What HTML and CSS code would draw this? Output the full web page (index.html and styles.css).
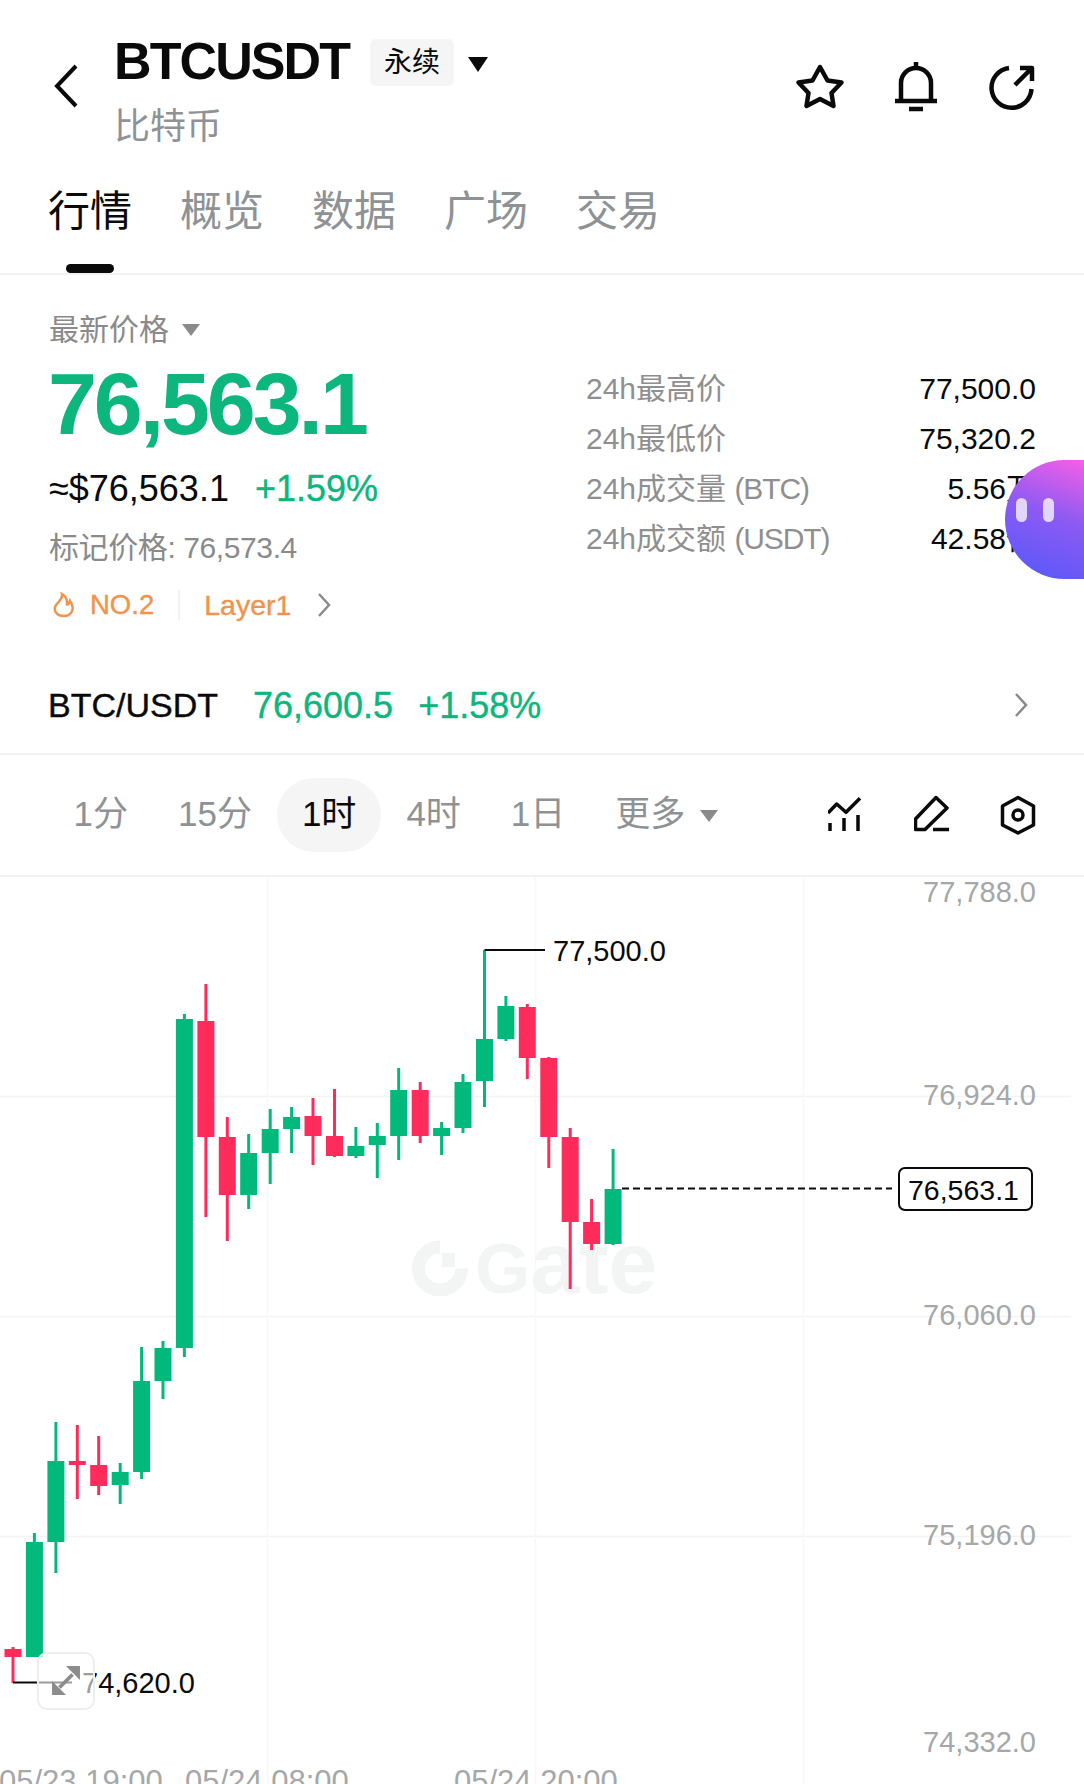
FILE: index.html
```html
<!DOCTYPE html>
<html>
    <head>
        <meta charset="utf-8">
        <title>BTCUSDT</title>
        <link rel="stylesheet" href="styles.css">
    </head>
    <body>
        <div class="page">
            <header class="header">
                <svg class="back" viewBox="0 0 26 46"><path d="M23 3 L4 23 L23 43"/></svg>
                <div class="title-block">
                    <div class="title-row">
                        <h1 class="symbol">BTCUSDT</h1>
                        <span class="badge">永续</span>
                        <span class="caret caret-black"></span>
                    </div>
                    <div class="subtitle">比特币</div>
                </div>
                <div class="header-icons">
                    <svg class="icon" viewBox="0 0 56 56"><path d="M28 9 L35.5 22.5 L49.5 24.5 L39.5 35 L41.5 48 L28 41 L14.5 48 L16.5 35 L6.5 24.5 L20.5 22.5 Z"/></svg>
                    <svg class="icon" viewBox="0 0 56 56"><path d="M13 43 V25 A15 15 0 0 1 43 25 V43 M7 43 H49 M28 4 V10 M21 51 H35"/></svg>
                    <svg class="icon" viewBox="0 0 56 56"><path d="M25 10 A20 20 0 1 0 47.5 31 M31 27 L48 10 M36 10 H48 V23"/></svg>
                </div>
            </header>

            <nav class="tabs">
                <a class="tab active">行情</a>
                <a class="tab">概览</a>
                <a class="tab">数据</a>
                <a class="tab">广场</a>
                <a class="tab">交易</a>
            </nav>

            <section class="quote">
                <div class="quote-main">
                    <div class="last-label">最新价格<span class="caret caret-gray"></span></div>
                    <div class="last-price">76,563.1</div>
                    <div class="fiat-row">
                        <span class="fiat">≈$76,563.1</span>
                        <span class="change">+1.59%</span>
                    </div>
                    <div class="mark">标记价格: 76,573.4</div>
                    <div class="tags">
                        <svg class="flame" viewBox="0 0 24 26"><path d="M10 2 C11 7 7 9 4 13 C1 18 4 24 12 24 C19 24 22 18 20 13 C19.5 11 18.5 10 18 9 C17.5 11 16 12.5 15 12.5 C15.5 8 13.5 4 10 2 Z"/></svg>
                        <span class="tag rank">NO.2</span>
                        <span class="tag-divider"></span>
                        <span class="tag">Layer1</span>
                        <svg class="chevron tag-chevron" viewBox="0 0 14 26"><path d="M2 2 L12 13 L2 24"/></svg>
                    </div>
                </div>
                <div class="stats">
                    <div class="stat"><span class="stat-label">24h最高价</span><span class="stat-value">77,500.0</span></div>
                    <div class="stat"><span class="stat-label">24h最低价</span><span class="stat-value">75,320.2</span></div>
                    <div class="stat"><span class="stat-label">24h成交量 <span class="unit">(BTC)</span></span><span class="stat-value">5.56万</span></div>
                    <div class="stat"><span class="stat-label">24h成交额 <span class="unit">(USDT)</span></span><span class="stat-value">42.58亿</span></div>
                </div>
            </section>

            <div class="spot">
                <span class="spot-name">BTC/USDT</span>
                <span class="spot-price">76,600.5</span>
                <span class="spot-change">+1.58%</span>
                <svg class="chevron spot-chevron" viewBox="0 0 14 26"><path d="M2 2 L12 13 L2 24"/></svg>
            </div>

            <div class="periods">
                <span class="period">1分</span>
                <span class="period">15分</span>
                <span class="period active">1时</span>
                <span class="period">4时</span>
                <span class="period">1日</span>
                <span class="period more">更多<span class="caret caret-gray"></span></span>
                <div class="tools">
                    <svg class="tool" viewBox="0 0 36 40"><path d="M0 18 L8.7 9 L18 17.3 L32 3.3 M2 36 V28 M16 36 V23 M30 36 V20"/></svg>
                    <svg class="tool" viewBox="0 0 36 40"><path d="M22 2.5 L33 13 L11 34.5 H1.5 V24 Z M19 34.5 H35"/></svg>
                    <svg class="tool" viewBox="0 0 36 40"><path d="M18 2.5 L33.5 11 V30 L18 38 L2.5 30 V11 Z"/><circle cx="18" cy="20" r="5"/></svg>
                </div>
            </div>

            <div class="chart">
                <svg class="chart-svg" viewBox="0 877 1084 907">
                    <path class="grid" d="M0 1096.5H1071M0 1316.5H1071M0 1536.5H1071"/>
                    <path class="grid-v" d="M267.5 877V1784M535.5 877V1784M803.5 877V1784"/>

                    <g class="watermark">
                        <path class="watermark-ring" d="M440 1247 A21.5 21.5 0 1 0 461.5 1268.5"/>
                        <rect x="442" y="1253" width="13" height="14"/>
                        <text x="475" y="1293"><tspan class="watermark-cap">G</tspan>ate</text>
                    </g>

                    <path class="wick up" d="M34.4 1533V1657M55.9 1422V1573M120.2 1463V1504M141.6 1347V1479M163 1341V1399M184.4 1014V1357M248.7 1134V1209M270.2 1109V1184M291.6 1107V1153M355.9 1127V1158M377.3 1123V1178M398.7 1068V1160M441.6 1122V1155M463 1074V1133M484.5 950V1107M505.9 996V1041M613.1 1149V1245"/>
                    <path class="body up" d="M34.4 1542V1657M55.9 1461V1542M120.2 1472V1485M141.6 1381V1472M163 1348V1381M184.4 1019V1348M248.7 1153V1195M270.2 1129V1153M291.6 1117V1129M355.9 1146V1156M377.3 1136V1145M398.7 1090V1136M441.6 1128V1136M463 1082V1128M484.5 1039V1081M505.9 1006V1039M613.1 1189V1244"/>
                    <path class="wick down" d="M13 1647V1683M77.3 1425V1499M98.7 1436V1495M205.9 984V1217M227.3 1117V1241M313 1098V1165M334.5 1089V1157M420.2 1082V1143M527.3 1004V1079M548.8 1057V1168M570.2 1128V1289M591.6 1199V1250"/>
                    <path class="body down" d="M13 1649V1657M77.3 1461V1465M98.7 1465V1486M205.9 1021V1137M227.3 1137V1195M313 1116V1136M334.5 1136V1156M420.2 1090V1136M527.3 1007V1058M548.8 1058V1137M570.2 1137V1222M591.6 1222V1244"/>

                    <path class="leader" d="M484.5 950H545M13 1682.5H72"/>
                    <text class="extreme" x="553" y="961">77,500.0</text>
                    <text class="extreme" x="82" y="1693">74,620.0</text>

                    <path class="last-line" d="M622 1188.5H892"/>
                    <rect class="last-box" x="899" y="1168" width="133" height="42" rx="6"/>
                    <text class="last-text" x="908" y="1200">76,563.1</text>

                    <text class="axis" x="1036" y="902">77,788.0</text>
                    <text class="axis" x="1036" y="1105">76,924.0</text>
                    <text class="axis" x="1036" y="1325">76,060.0</text>
                    <text class="axis" x="1036" y="1545">75,196.0</text>
                    <text class="axis" x="1036" y="1752">74,332.0</text>

                    <text class="time" x="-1" y="1792">05/23 19:00</text>
                    <text class="time" x="185" y="1792">05/24 08:00</text>
                    <text class="time" x="454" y="1792">05/24 20:00</text>
                </svg>
                <button class="expand" type="button">
                    <svg viewBox="0 0 58 58"><path class="expand-line" d="M22 36 L36 22"/><path class="expand-head" d="M44 13 V28 L29 13 Z M14 44 V29 L29 44 Z"/></svg>
                </button>
            </div>

            <div class="assistant">
                <span class="eye"></span>
                <span class="eye"></span>
            </div>
        </div>
    </body>
</html>
```

FILE: styles.css
```css
html {
    font-family: "Liberation Sans", "Noto Sans CJK SC", sans-serif;
}

body {
    margin: 0;
    background: white;
    color: #0a0a0a;
}

* {
    box-sizing: border-box;
}

.page {
    position: relative;
    width: 1084px;
    height: 1784px;
    overflow: hidden;
}

svg {
    display: block;
    flex: none;
}

/* header */

.header {
    display: flex;
    height: 160px;
    padding: 35px 44px 0 53px;
}

.back {
    width: 26px;
    height: 46px;
    margin-top: 28px;
    fill: none;
    stroke: #0a0a0a;
    stroke-width: 4;
}

.title-block {
    margin-left: 35px;
}

.title-row {
    display: flex;
    align-items: center;
    height: 52px;
}

.symbol {
    margin: 0;
    font-size: 52px;
    line-height: 52px;
    letter-spacing: -1.9px;
    font-weight: bold;
}

.badge {
    width: 84px;
    height: 47px;
    margin: 2px 0 0 21px;
    border-radius: 6px;
    background: #f5f5f5;
    font-size: 28px;
    line-height: 47px;
    text-align: center;
}

.caret {
    display: inline-block;
    width: 0;
    height: 0;
    border-style: solid;
    border-color: transparent;
}

.caret-black {
    margin: 6px 0 0 14px;
    border-width: 15px 10px 0;
    border-top-color: #0a0a0a;
}

.caret-gray {
    margin-left: 13px;
    border-width: 12px 9px 0;
    border-top-color: #8a8a8a;
    vertical-align: 4px;
}

.subtitle {
    margin-top: 20px;
    font-size: 36px;
    line-height: 40px;
    color: #8e9295;
}

.header-icons {
    display: flex;
    gap: 40px;
    margin-top: 23px;
    margin-left: auto;
}

.icon {
    width: 56px;
    height: 56px;
    fill: none;
    stroke: #0a0a0a;
    stroke-width: 4.5;
    stroke-linejoin: round;
}

/* tabs */

.tabs {
    display: flex;
    gap: 48px;
    height: 115px;
    padding: 32px 0 0 48px;
    border-bottom: 2px solid #f2f2f2;
}

.tab {
    width: 84px;
    font-size: 42px;
    line-height: 40px;
    white-space: nowrap;
    color: #8e9295;
}

.tab.active {
    color: #0a0a0a;
}

.tab.active::after {
    content: "";
    display: block;
    width: 48px;
    height: 9px;
    margin: 32px 0 0 18px;
    border-radius: 5px;
    background: #0a0a0a;
}

/* quote */

.quote {
    display: flex;
    height: 379px;
    padding: 35px 48px 0 49px;
}

.quote-main {
    flex: 1;
}

.last-label {
    font-size: 30px;
    line-height: 40px;
    color: #8a8a8a;
}

.last-price {
    margin: 6px 0 0 -1px;
    font-size: 88px;
    line-height: 96px;
    font-weight: bold;
    letter-spacing: -3.1px;
    color: #0cb67c;
}

.fiat-row {
    display: flex;
    gap: 26px;
    margin-top: 17px;
    font-size: 36px;
    line-height: 40px;
}

.change {
    color: #0cb67c;
    -webkit-text-stroke: 0.4px #0cb67c;
}

.mark {
    margin-top: 19px;
    font-size: 30px;
    line-height: 40px;
    letter-spacing: -0.4px;
    color: #8a8a8a;
}

.tags {
    display: flex;
    align-items: center;
    margin-top: 17px;
    height: 40px;
    padding-left: 3px;
}

.flame {
    width: 24px;
    height: 26px;
    fill: none;
    stroke: #f0944d;
    stroke-width: 2.5;
}

.tag {
    font-size: 28.5px;
    color: #f0944d;
    -webkit-text-stroke: 0.4px #f0944d;
}

.rank {
    margin-left: 14px;
    font-size: 27.5px;
}

.tag-divider {
    width: 2px;
    height: 30px;
    margin: 0 24px;
    background: #f2f2f2;
}

.chevron {
    width: 14px;
    height: 26px;
    fill: none;
    stroke: #8a8a8a;
    stroke-width: 2.5;
}

.tag-chevron {
    margin-left: 26px;
}

.stats {
    width: 450px;
    padding-top: 54px;
}

.stat {
    display: flex;
    justify-content: space-between;
    height: 50px;
    font-size: 30px;
    line-height: 50px;
}

.stat-label {
    color: #8f8f8f;
}

.unit {
    letter-spacing: -1.1px;
}

/* spot row */

.spot {
    display: flex;
    align-items: center;
    height: 101px;
    padding: 4px 56px 0 48px;
    border-bottom: 2px solid #f2f2f2;
}

.spot-name {
    font-size: 34px;
    -webkit-text-stroke: 0.4px #0a0a0a;
}

.spot-price,
.spot-change {
    font-size: 36px;
    color: #0cb67c;
    -webkit-text-stroke: 0.4px #0cb67c;
}

.spot-price {
    margin-left: 35px;
}

.spot-change {
    margin-left: 25px;
}

.spot-chevron {
    margin: -2px 0 0 auto;
}

/* periods */

.periods {
    display: flex;
    align-items: center;
    gap: 1px;
    height: 122px;
    padding: 0 48px 0 49px;
    border-bottom: 2px solid #f2f2f2;
}

.period {
    height: 74px;
    padding: 0 24.5px;
    border-radius: 37px;
    font-size: 35px;
    line-height: 72px;
    color: #8e9295;
}

.period.active {
    background: #f5f5f5;
    color: #0a0a0a;
}

.more {
    padding-right: 0;
}

.more .caret {
    margin-left: 15px;
}

.tools {
    display: flex;
    gap: 50px;
    margin-left: auto;
}

.tool {
    width: 36px;
    height: 40px;
    fill: none;
    stroke: #0a0a0a;
    stroke-width: 3.5;
    stroke-linejoin: round;
}

/* chart */

.chart {
    position: relative;
    height: 907px;
}

.chart-svg {
    width: 1084px;
    height: 907px;
}

.grid {
    fill: none;
    stroke: #f4f4f4;
    stroke-width: 1.5;
}

.grid-v {
    fill: none;
    stroke: #f8f8f8;
    stroke-width: 1.5;
}

.watermark {
    fill: #f3f4f4;
}

.watermark text {
    font-size: 88px;
    font-weight: bold;
}

.watermark-cap {
    font-size: 71px;
}

.watermark-ring {
    fill: none;
    stroke: #f3f4f4;
    stroke-width: 13;
}

.wick {
    fill: none;
    stroke-width: 3;
}

.body {
    fill: none;
    stroke-width: 17;
}

.up {
    stroke: #02b97c;
}

.down {
    stroke: #fe2c5a;
}

.leader {
    fill: none;
    stroke: #0a0a0a;
    stroke-width: 2;
}

.extreme {
    font-size: 29px;
    fill: #0a0a0a;
}

.last-line {
    stroke: #0a0a0a;
    stroke-width: 2;
    stroke-dasharray: 7 4;
}

.last-box {
    fill: white;
    stroke: #0a0a0a;
    stroke-width: 2;
}

.last-text {
    font-size: 28.5px;
    fill: #0a0a0a;
}

.axis {
    font-size: 29px;
    text-anchor: end;
    fill: #a5a7a9;
}

.time {
    font-size: 31px;
    fill: #a5a7a9;
}

.expand {
    position: absolute;
    left: 37px;
    top: 775px;
    width: 58px;
    height: 58px;
    padding: 0;
    border: 2px solid #eeeeee;
    border-radius: 10px;
    background: rgba(255, 255, 255, 0.6);
}

.expand svg {
    width: 54px;
    height: 54px;
}

.expand-line {
    fill: none;
    stroke: #8c8c8c;
    stroke-width: 4;
}

.expand-head {
    fill: #8c8c8c;
}

/* floating assistant */

.assistant {
    position: absolute;
    right: 0;
    top: 460px;
    display: flex;
    align-items: flex-start;
    gap: 16px;
    width: 79px;
    height: 119px;
    padding: 38px 0 0 11px;
    border-radius: 60px 0 0 60px;
    background: linear-gradient(200deg, #f65fe8 0%, #8c5af2 45%, #5458fb 100%);
}

.eye {
    width: 11px;
    height: 24px;
    border-radius: 6px;
    background: rgba(255, 255, 255, 0.75);
}
```
